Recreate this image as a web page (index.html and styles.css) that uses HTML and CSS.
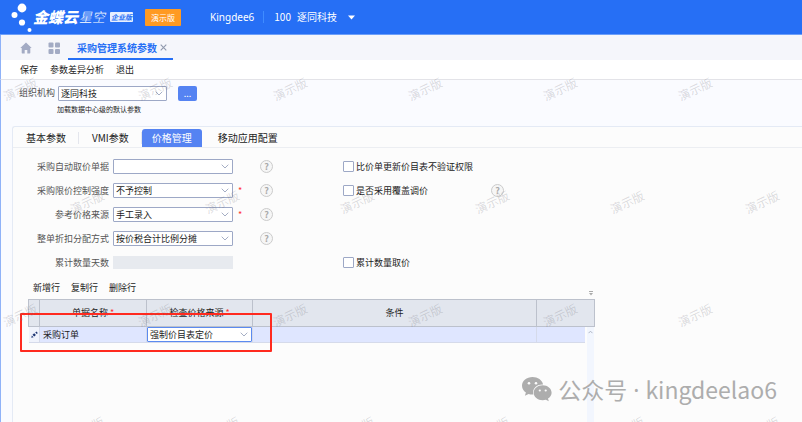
FILE: index.html
```
<!DOCTYPE html>
<html lang="zh-CN">
<head>
    <meta charset="UTF-8">
    <meta name="viewport" content="width=device-width, initial-scale=1.0">
    <title>采购管理系统参数</title>
    <link rel="stylesheet" href="styles.css">
</head>
<body>
    <header class="topbar">
        <svg class="logo-dots" width="24" height="34" viewBox="0 0 24 34" fill="#fff">
            <circle cx="12" cy="8" r="4.4"/>
            <circle cx="4.5" cy="15" r="3"/>
            <circle cx="12" cy="22.5" r="3.1"/>
            <circle cx="19.5" cy="30" r="2"/>
        </svg>
        <span class="brand">金蝶云</span>
        <span class="brand-sub">星空</span>
        <span class="edition">企业版</span>
        <span class="demo-badge">演示版</span>
        <span class="user">Kingdee6</span>
        <button class="org-switch" type="button">
            <span>100</span>
            <span>逐同科技</span>
            <svg width="7" height="5" viewBox="0 0 7 5"><path d="M0 0.5h7L3.5 4.5z" fill="#fff"/></svg>
        </button>
    </header>

    <nav class="page-tabs">
        <a class="icon-link" href="#" aria-label="首页">
            <svg width="12" height="12" viewBox="0 0 12 12" fill="#a3abc4"><path d="M6 0.5 0.3 6h1.4v4.8c0 .4.2.7.6.7h2.4V8h2.6v3.5h2.4c.4 0 .6-.3.6-.7V6h1.4z"/></svg>
        </a>
        <a class="icon-link" href="#" aria-label="应用">
            <svg width="12" height="12" viewBox="0 0 12 12" fill="#a3abc4">
                <rect x="0.5" y="0.5" width="5" height="5" rx="1"/>
                <rect x="7" y="0.5" width="5" height="5" rx="1"/>
                <rect x="0.5" y="7" width="5" height="5" rx="1"/>
                <rect x="7" y="7" width="5" height="5" rx="1"/>
            </svg>
        </a>
        <div class="page-tab">
            <a href="#">采购管理系统参数</a>
            <button type="button" aria-label="关闭">
                <svg width="7" height="7" viewBox="0 0 7 7"><path d="M0.7 0.7l5.6 5.6M6.3 0.7L0.7 6.3" stroke="#8f98ad" stroke-width="1.1"/></svg>
            </button>
        </div>
    </nav>

    <div class="toolbar">
        <button type="button">保存</button>
        <button type="button">参数差异分析</button>
        <button type="button">退出</button>
    </div>

    <main class="content">
        <section class="org">
            <div class="org-row">
                <label for="org">组织机构</label>
                <select id="org"><option>逐同科技</option></select>
                <button class="more" type="button">...</button>
            </div>
            <p class="hint">加载数据中心级的默认参数</p>
        </section>

        <section class="panel">
            <div class="tabs" role="tablist">
                <button type="button" role="tab">基本参数</button>
                <button type="button" role="tab">VMI参数</button>
                <button class="active" type="button" role="tab" aria-selected="true">价格管理</button>
                <button type="button" role="tab">移动应用配置</button>
            </div>

            <form class="params">
                <div class="row">
                    <label for="auto-price">采购自动取价单据</label>
                    <select id="auto-price"><option></option></select>
                    <span></span>
                    <span class="help">?</span>
                    <label class="check"><input type="checkbox">比价单更新价目表不验证权限</label>
                </div>
                <div class="row">
                    <label for="limit">采购限价控制强度</label>
                    <select id="limit"><option>不予控制</option></select>
                    <span class="required">*</span>
                    <span class="help">?</span>
                    <label class="check"><input type="checkbox">是否采用覆盖调价</label>
                    <span class="help">?</span>
                </div>
                <div class="row">
                    <label for="source">参考价格来源</label>
                    <select id="source"><option>手工录入</option></select>
                    <span class="required">*</span>
                    <span class="help">?</span>
                </div>
                <div class="row">
                    <label for="discount">整单折扣分配方式</label>
                    <select id="discount"><option>按价税合计比例分摊</option></select>
                    <span></span>
                    <span class="help">?</span>
                </div>
                <div class="row">
                    <label for="days">累计数量天数</label>
                    <input id="days" class="days" type="text" disabled>
                    <span></span>
                    <span></span>
                    <label class="check"><input type="checkbox">累计数量取价</label>
                </div>
            </form>

            <div class="grid">
                <div class="grid-actions">
                    <button type="button">新增行</button>
                    <button type="button">复制行</button>
                    <button type="button">删除行</button>
                    <svg class="grid-menu" width="4" height="5" viewBox="0 0 4 5"><path d="M0 0.5h4" stroke="#aaa"/><path d="M0 2h4L2 4.5z" fill="#aaa"/></svg>
                </div>
                <div class="grid-body">
                    <table>
                        <colgroup>
                            <col class="col-mark">
                            <col class="col-name">
                            <col class="col-source">
                            <col>
                            <col class="col-last">
                        </colgroup>
                        <thead>
                            <tr>
                                <th></th>
                                <th>单据名称 <span class="star">*</span></th>
                                <th>检查价格来源 <span class="star">*</span></th>
                                <th>条件</th>
                                <th></th>
                            </tr>
                        </thead>
                        <tbody>
                            <tr>
                                <td class="mark"><svg width="7" height="7" viewBox="0 0 7 7"><path d="M0.3 6.7l.5-2.3 1.8 1.8zM1.5 3.8l1.7-1.6 1.7 1.7-1.7 1.6zM4.3 1.4l1-1 1.5 1.5-1 1z" fill="#1d3573"/></svg></td>
                                <td>采购订单</td>
                                <td class="edit"><select aria-label="检查价格来源"><option>强制价目表定价</option></select></td>
                                <td></td>
                                <td></td>
                            </tr>
                        </tbody>
                    </table>
                    <div class="scrollbar">
                        <svg width="5" height="4" viewBox="0 0 5 4"><path d="M0.5 3.2l2-2 2 2" fill="none" stroke="#aeb5c4"/></svg>
                    </div>
                    <div class="highlight"></div>
                </div>
            </div>
        </section>
    </main>

    <!-- 演示版水印 -->
    <div class="watermarks" aria-hidden="true">
        <div class="wm-row"><span>演示版</span><span>演示版</span><span>演示版</span><span>演示版</span><span>演示版</span><span>演示版</span></div>
        <div class="wm-row shifted"><span>演示版</span><span>演示版</span><span>演示版</span><span>演示版</span><span>演示版</span><span>演示版</span></div>
        <div class="wm-row"><span>演示版</span><span>演示版</span><span>演示版</span><span>演示版</span><span>演示版</span><span>演示版</span></div>
        <div class="wm-row shifted"><span>演示版</span><span>演示版</span><span>演示版</span><span>演示版</span><span>演示版</span><span>演示版</span></div>
    </div>

    <div class="account">
        <svg width="30" height="25" viewBox="0 0 30 25">
            <path d="M10.5 0C4.700 0 0 3.900 0 8.800c0 2.800 1.500 5.200 3.900 6.800l-1 3.200 3.700-1.900c1.200.4 2.500.6 3.900.6h.9c-.2-.7-.3-1.400-.3-2.100 0-4.500 4.200-8 9.300-8h.7C20.200 3.200 15.800 0 10.500 0z"/>
            <path d="M20.700 8.200c-5 0-9 3.300-9 7.500s4 7.500 9 7.500c1.100 0 2.200-.2 3.200-.5l2.900 1.600-.8-2.700c2.200-1.400 3.600-3.500 3.600-5.900 0-4.200-4-7.500-8.900-7.500z"/>
            <g fill="#fcfcfc"><circle cx="7" cy="6.200" r="1.300"/><circle cx="14" cy="6.200" r="1.300"/><circle cx="17.800" cy="13.500" r="1.100"/><circle cx="23.700" cy="13.500" r="1.100"/></g>
        </svg>
        <span>公众号<span class="dot"> · </span>kingdeelao6</span>
    </div>
</body>
</html>
```
FILE: styles.css
```
* {
    box-sizing: border-box;
}

body {
    margin: 0;
    min-height: 100vh;
    display: flex;
    flex-direction: column;
    position: relative;
    overflow: hidden;
    background-color: #fafbff;
    color: #222;
    font-family: "Noto Sans CJK SC", sans-serif;
    font-size: 9px;
    line-height: 14px;
}

button, select, input {
    font: inherit;
    color: inherit;
    margin: 0;
}

button {
    padding: 0;
    border: none;
    background: none;
    cursor: pointer;
}

a {
    color: inherit;
    text-decoration: none;
}

svg {
    display: block;
    flex: none;
}

select {
    height: 15px;
    width: 120px;
    padding: 0 14px 0 2px;
    border: 1px solid #9da8c6;
    border-radius: 1px;
    appearance: none;
    line-height: 13px;
    background: #fff url("data:image/svg+xml,%3Csvg xmlns='http://www.w3.org/2000/svg' width='8' height='5'%3E%3Cpath d='M.7.7L4 4 7.300.7' fill='none' stroke='%23a5aec4'/%3E%3C/svg%3E") no-repeat right 3px center;
}

/* 顶部栏 */
.topbar {
    height: 35px;
    display: flex;
    align-items: center;
    padding-left: 10px;
    background-color: #266ff5;
    border-bottom: 1px solid #6d9ff9;
    color: #fff;
    font-size: 10px;
    white-space: nowrap;
}

.brand {
    margin: 0 1px 0 -1px;
    font-size: 15px;
    font-weight: 900;
    font-style: italic;
}

.brand-sub {
    margin-right: 5px;
    font-size: 13px;
    font-weight: 300;
    font-style: italic;
}

.edition {
    padding: 0 1px;
    border-radius: 1px;
    background-color: #e6efff;
    color: #266ff5;
    font-size: 7px;
    font-weight: bold;
    font-style: italic;
    line-height: 10px;
}

.demo-badge {
    margin-left: 12px;
    padding: 0 6px;
    border-radius: 1px;
    background-color: #ff9a22;
    font-size: 8px;
    line-height: 17px;
}

.user {
    margin-left: 29px;
    padding-right: 9px;
    border-right: 1px solid #3f8cff;
    font-family: "Noto Sans", "Noto Sans CJK SC", sans-serif;
    line-height: 12px;
}

.org-switch {
    display: flex;
    align-items: center;
    gap: 6px;
    margin-left: 10px;
}

.org-switch svg {
    margin-left: 5px;
}

/* 页签 */
.page-tabs {
    height: 25px;
    display: flex;
    background-color: #f5f6fb;
    border-left: 1px solid #8fb2f8;
    padding-left: 19px;
}

.icon-link {
    display: flex;
    align-items: center;
    margin-right: 16px;
}

.page-tab {
    display: flex;
    align-items: center;
    gap: 3px;
    margin-left: -8px;
    padding: 2px 6px 0 9px;
    border-bottom: 2px solid #266ff5;
    color: #266ff5;
    font-size: 10px;
    font-weight: bold;
}

.toolbar {
    height: 20px;
    display: flex;
    align-items: center;
    gap: 12px;
    padding-left: 19px;
    background-color: #fff;
    border-left: 1px solid #8fb2f8;
    border-bottom: 1px solid #e3e3e8;
}

.content {
    flex: 1;
    display: flex;
    flex-direction: column;
    border-left: 1px solid #8fb2f8;
    padding-left: 11px;
}

.org {
    height: 46px;
    padding: 6px 0 0 7px;
}

.org-row {
    display: flex;
    gap: 3px;
    color: #555;
}

.org-row select {
    width: 109px;
    color: #222;
}

.more {
    width: 19px;
    height: 15px;
    margin-left: 8px;
    border-radius: 2px;
    background-color: #5583f2;
    color: #fff;
    line-height: 12px;
}

.hint {
    margin: 1px 0 0 38px;
    font-size: 7px;
}

/* 参数面板 */
.panel {
    flex: 1;
    display: flex;
    flex-direction: column;
    border: 1px solid #e4eaf5;
    border-width: 1px 0 0 1px;
    border-top-left-radius: 3px;
    background-color: #fcfcfc;
}

.tabs {
    height: 21px;
    display: flex;
    align-items: flex-end;
    border-bottom: 1px solid #eceef2;
    font-size: 10px;
}

.tabs button {
    height: 18px;
    padding: 0 13px;
    background: linear-gradient(#e4e6ed, #e4e6ed) no-repeat right center / 1px 12px;
}

.tabs button:last-child {
    padding-left: 16px;
    background: none;
}

.tabs .active {
    padding: 0 10px;
    border-radius: 3px 3px 0 0;
    background: #5583f2;
    color: #fff;
}

.params {
    display: grid;
    gap: 9px;
    padding-top: 11px;
}

.row {
    height: 15px;
    display: grid;
    grid-template-columns: 96px 120px 23px 83px 148px 1fr;
    align-items: center;
    white-space: nowrap;
}

.row > label:first-child {
    text-align: right;
    color: #555;
}

.row > select,
.days {
    margin-left: 4px;
}

.days {
    width: 120px;
    height: 13px;
    border: none;
    background-color: #e7eaef;
}

.required {
    padding-left: 9px;
    color: #f33;
}

.row .help {
    width: 13px;
    height: 13px;
    margin-left: 8px;
    border: 1px solid #cbcbcb;
    border-radius: 50%;
    background-color: #f6f6f6;
    color: #aaa;
    font-weight: bold;
    line-height: 11px;
    text-align: center;
}

.check {
    display: flex;
    align-items: center;
    gap: 2px;
    margin-left: 8px;
}

.check input {
    width: 11px;
    height: 11px;
    border: 1px solid #9da8c6;
    border-radius: 1px;
    appearance: none;
    background-color: #fff;
}

/* 表格 */
.grid {
    flex: 1;
    display: flex;
    flex-direction: column;
    width: 100%;
    max-width: 582px;
    padding: 11px 0 0 15px;
}

.grid-actions {
    height: 18px;
    display: flex;
    align-items: flex-start;
    gap: 11px;
    padding: 0 2px 0 5px;
}

.grid-menu {
    margin: 10px 0 0 auto;
}

.grid-body {
    flex: 1;
    position: relative;
}

table {
    width: 100%;
    border-collapse: collapse;
    table-layout: fixed;
}

.col-mark { width: 11px; }
.col-name { width: 107px; }
.col-source { width: 106px; }
.col-last { width: 58px; }

th {
    height: 27px;
    padding: 0;
    border: 1px solid #bcc1cc;
    background-color: #e2e6ee;
    font-weight: normal;
}

.star {
    color: #f33;
}

td {
    height: 16px;
    padding: 0 3px;
    border: 1px solid #d5daea;
    border-width: 0 1px 1px 0;
    background-color: #dfe6ff;
}

td.mark {
    padding: 0 2px;
    background-color: #f0f3fc;
}

td.edit {
    padding: 0;
}

td.edit select {
    display: block;
    width: 100%;
    border-color: #5b8af0;
}

.scrollbar {
    position: absolute;
    top: 28px;
    right: 0;
    bottom: 0;
    width: 10px;
    padding: 3px 1px 0;
    border: solid #fcfcfc;
    border-width: 0 1px 0 2px;
    background-color: #f2f6fe;
}

.highlight {
    position: absolute;
    top: 14px;
    left: -8px;
    width: 252px;
    height: 39px;
    border: 2px solid #ff2a1f;
    border-radius: 1px;
}

/* 水印 */
.watermarks {
    position: absolute;
    inset: 70px 0 0;
    padding-top: 10px;
    overflow: hidden;
    color: rgba(110, 110, 120, 0.24);
    font-size: 12px;
    line-height: 18px;
    pointer-events: none;
}

.wm-row {
    display: flex;
    gap: 99px;
    height: 113px;
    padding-left: 2px;
}

.wm-row.shifted {
    padding-left: 69px;
}

.wm-row span {
    flex: none;
    width: 36px;
    height: 18px;
    transform: rotate(-25deg);
}

.account {
    position: absolute;
    right: 25px;
    bottom: 16px;
    display: flex;
    align-items: center;
    gap: 6px;
    color: #adadad;
    fill: #adadad;
    font-size: 23px;
    line-height: 32px;
    white-space: nowrap;
}

.dot {
    font-family: "Noto Sans", sans-serif;
}
```
